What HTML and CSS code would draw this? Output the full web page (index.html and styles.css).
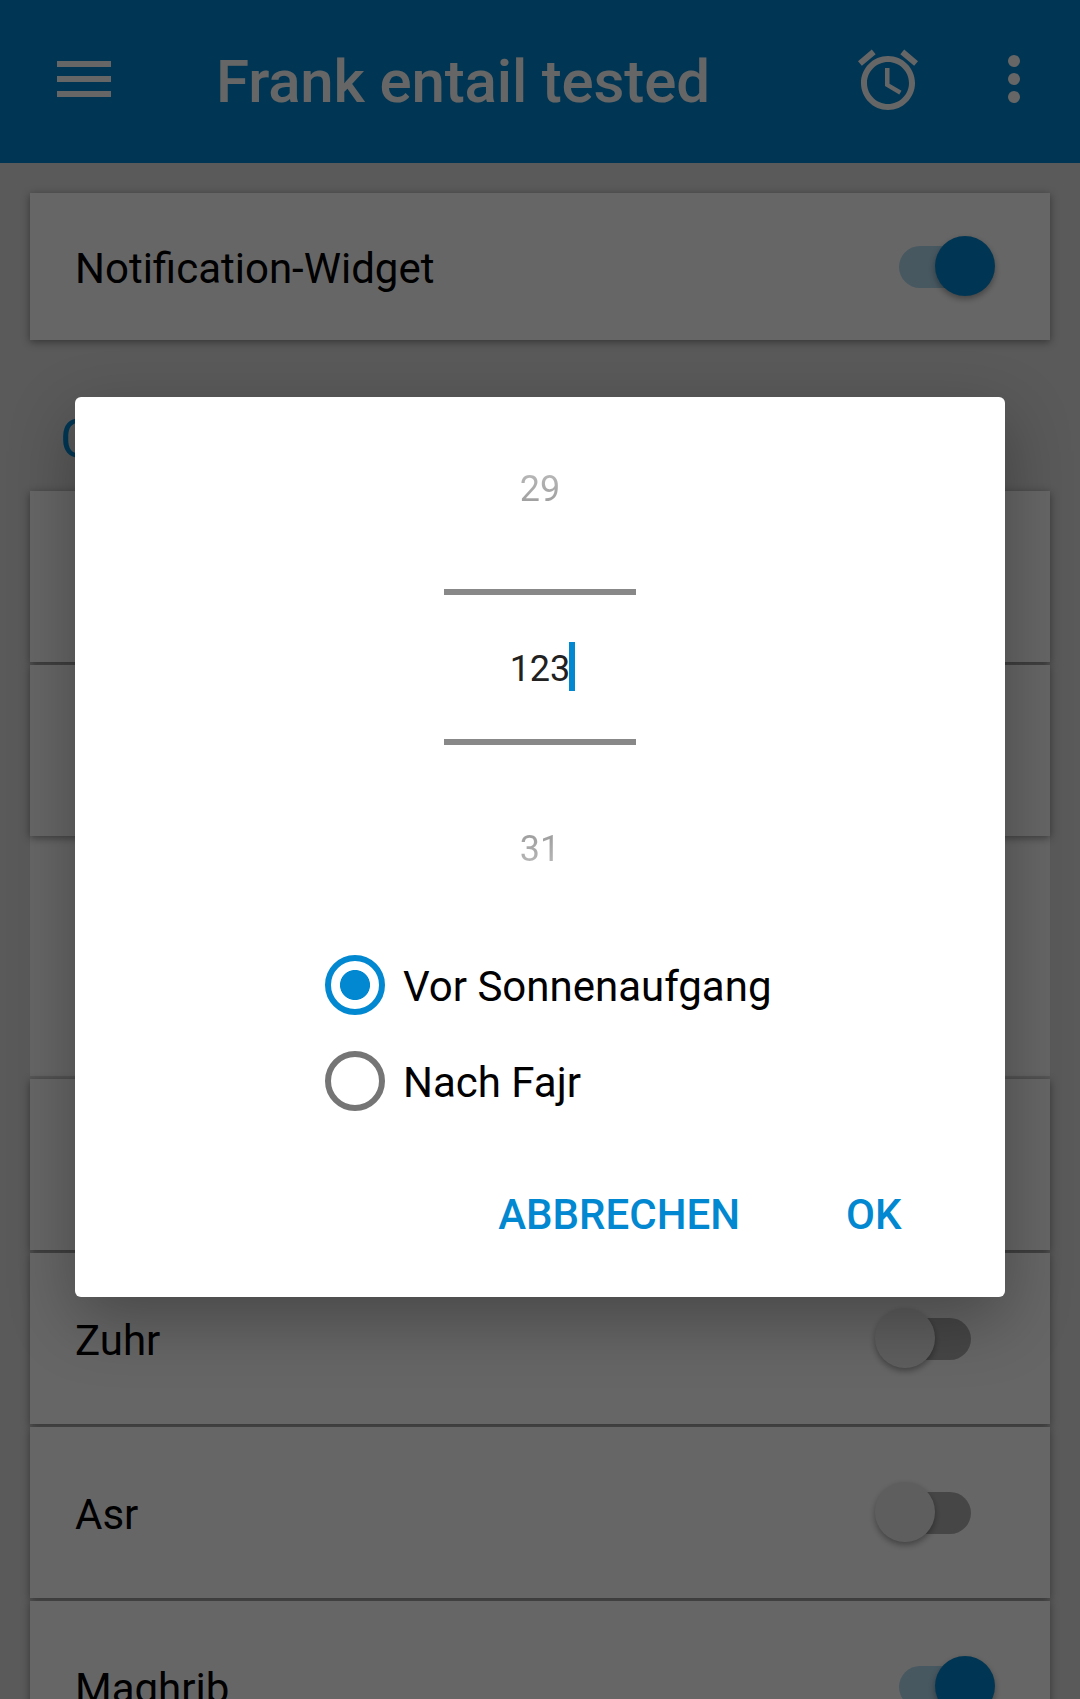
FILE: index.html
```html
<!DOCTYPE html>
<html lang="de">
<head>
<meta charset="utf-8">
<title>Frank entail tested</title>
<link rel="stylesheet" href="styles.css">
</head>
<body>
<div class="screen">
  <header class="toolbar">
    <svg class="icon" viewBox="0 0 24 24"><path d="M3 18h18v-2H3v2zm0-5h18v-2H3v2zm0-7v2h18V6H3z"/></svg>
    <h1 class="title">Frank entail tested</h1>
    <svg class="icon icon-alarm" viewBox="0 0 24 24"><path d="M22 5.72l-4.6-3.86-1.29 1.53 4.6 3.86L22 5.72zM7.88 3.39L6.6 1.86 2 5.71l1.29 1.53 4.59-3.85zM12.5 8H11v6l4.75 2.85.75-1.23-4-2.37V8zM12 4c-4.97 0-9 4.03-9 9s4.02 9 9 9c4.97 0 9-4.03 9-9s-4.03-9-9-9zm0 16c-3.87 0-7-3.13-7-7s3.13-7 7-7 7 3.13 7 7-3.13 7-7 7z"/></svg>
    <svg class="icon icon-more" viewBox="0 0 24 24"><circle cx="12" cy="6" r="2"/><circle cx="12" cy="12" r="2"/><circle cx="12" cy="18" r="2"/></svg>
  </header>
  <main class="content">
    <section class="group">
      <div class="card card-widget"><span class="label">Notification-Widget</span><span class="switch on"></span></div>
    </section>
    <h2 class="heading">C</h2>
    <section class="group">
      <div class="card"></div>
      <div class="card"></div>
      <div class="panel"></div>
      <div class="card"></div>
      <div class="card"><span class="label">Zuhr</span><span class="switch"></span></div>
      <div class="card"><span class="label">Asr</span><span class="switch"></span></div>
      <div class="card"><span class="label">Maghrib</span><span class="switch on"></span></div>
    </section>
  </main>
  <div class="scrim">
    <div class="dialog">
      <div class="picker">
        <span class="number previous">29</span>
        <div class="current"><span class="value">123<i class="caret"></i></span></div>
        <span class="number next">31</span>
      </div>
      <div class="options">
        <div class="option"><span class="radio checked"></span><span class="option-text">Vor Sonnenaufgang</span></div>
        <div class="option"><span class="radio"></span><span class="option-text">Nach Fajr</span></div>
      </div>
      <div class="actions"><span class="action">ABBRECHEN</span><span class="action">OK</span></div>
    </div>
  </div>
</div>
</body>
</html>
```

FILE: styles.css
```css
* { box-sizing: border-box; }
body { margin: 0; font-family: Roboto, sans-serif; color: #000; }
.screen { position: relative; width: 1080px; height: 1699px; overflow: hidden; background: #e0e0e0; }

.toolbar { display: flex; align-items: flex-start; height: 163px; padding: 43px 30px 0 48px; background: #0288d1; }
.icon { flex: none; width: 72px; height: 72px; fill: #fff; }
.icon-alarm { margin: 1px 54px 0 auto; }
.title { margin: 3px 0 0 96px; font-size: 60px; line-height: 72px; font-weight: 500; letter-spacing: -.15px; color: #fff; white-space: nowrap; }

.content { padding: 30px 30px 0; }
.group { display: flex; flex-direction: column; gap: 3px; isolation: isolate; }
.card { position: relative; flex: none; display: flex; align-items: center; justify-content: space-between; height: 171px; padding: 0 79px 0 45px; background: #fff; }
.card::before { content: ""; position: absolute; inset: 0; z-index: -1; box-shadow: 0 2px 8px rgba(0, 0, 0, .42); }
.card-widget { height: 147px; }
.panel { position: relative; z-index: -2; height: 240px; margin-top: -3px; background: #fff; }
.label { padding-top: 4px; font-size: 42px; line-height: 50px; }
.heading { height: 151px; margin: 0; padding: 67px 0 0 30px; font-size: 54px; line-height: 64px; font-weight: 400; color: #0288d1; }

.switch { position: relative; display: flex; align-items: center; justify-content: flex-end; width: 96px; height: 60px; }
.switch::before { content: ""; width: 86px; height: 42px; border-radius: 21px; background: #b0b0b0; }
.switch::after { content: ""; position: absolute; left: 0; top: -.5px; width: 60px; height: 60px; border-radius: 50%; background: #ececec; box-shadow: 0 3px 6px rgba(0, 0, 0, .35); }
.switch.on { justify-content: flex-start; margin-right: -24px; }
.switch.on::before { background: #b3dbf1; }
.switch.on::after { left: auto; right: .5px; background: #0288d1; }

.scrim { position: absolute; inset: 0; padding: 397px 75px 0; background: rgba(0, 0, 0, .6); }
.dialog { display: flex; flex-direction: column; height: 900px; border-radius: 6px; background: #fff; box-shadow: 0 22px 66px rgba(0, 0, 0, .3); }
.picker { display: flex; flex-direction: column; align-items: center; padding-top: 71px; font-size: 36px; line-height: 42px; color: #212121; }
.number { color: transparent; -webkit-background-clip: text; background-clip: text; }
.previous { background-image: linear-gradient(#bcbcbc, #999); }
.next { background-image: linear-gradient(#999, #bcbcbc); }
.current { display: flex; align-items: center; justify-content: center; width: 192px; height: 156px; margin: 79px 0 83px; border: solid #888; border-width: 6px 0; }
.value { position: relative; padding-top: 4px; }
.caret { position: absolute; right: -5px; top: -2px; width: 6px; height: 49px; background: #0288d1; }
.options { display: flex; flex-direction: column; gap: 36px; padding: 85px 0 0 250px; }
.option { display: flex; align-items: center; gap: 18px; height: 60px; }
.option-text { padding-top: 4px; font-size: 42px; line-height: 50px; }
.radio { width: 60px; height: 60px; border: 6px solid #757575; border-radius: 50%; }
.radio.checked { border-color: #0288d1; background: radial-gradient(circle, #0288d1 14.6px, transparent 15.4px); }
.actions { display: flex; justify-content: flex-end; gap: 106px; padding: 79px 103.5px 0 0; font-size: 42px; line-height: 50px; font-weight: 500; color: #0288d1; }
```
